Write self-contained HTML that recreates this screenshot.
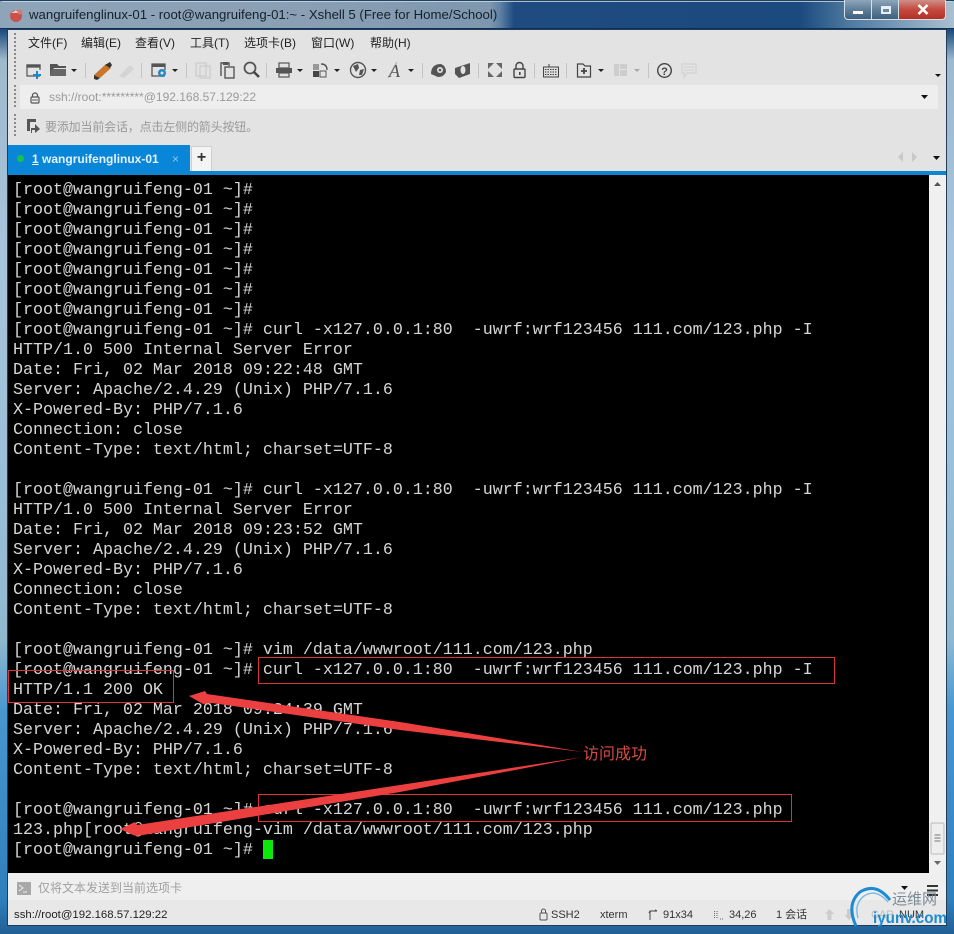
<!DOCTYPE html>
<html><head><meta charset="utf-8">
<style>
html,body{margin:0;padding:0;background:#1d5080}
body{width:954px;height:934px;position:relative;overflow:hidden;font-family:"Liberation Sans","Noto Sans CJK SC",sans-serif}
.a{position:absolute}
#frame{left:0;top:0;width:954px;height:934px;background:linear-gradient(180deg,#1c4a7c 0,#1c4a7c 30px,#9fb9cc 60px,#a7c4dc 250px,#9cc0da 450px,#8fb8cf 640px,#4a97cf 710px,#2f7fbd 900px,#215f94 934px)}
#titlebg{left:0;top:0;width:954px;height:29px;background:linear-gradient(90deg,#8ea4b8 0,#8a9fb4 300px,#7e97ae 490px,#5f82a5 500px,#1f4b80 514px,#1b4a7e 800px,#4f7aa0 850px,#aac0d0 954px);border-top:1px solid #20415f;border-bottom:1px solid #0f3158;box-sizing:border-box}
#tline{left:2px;top:1px;width:950px;height:1px;background:#cfdbe4;opacity:.8}
#title{left:29px;top:7px;font-size:13.2px;line-height:16px;color:#15202c;white-space:nowrap}
#bord{left:7px;top:29px;width:940px;height:897px;border:1px solid #1f3d58;box-sizing:border-box}
#panel{left:8px;top:30px;width:938px;height:141px;background:#e3e3e3}
.menu{position:absolute;top:35px;font-size:12px;line-height:16px;color:#222;white-space:nowrap}
#addr{left:20px;top:85px;width:918px;height:24px;background:#eeeeee}
#addrt{left:49px;top:90px;font-size:12px;line-height:15px;color:#9a9a9a;white-space:nowrap}
#hint{left:45px;top:119px;font-size:12px;line-height:16px;color:#999;white-space:nowrap;letter-spacing:-.17px}
#bluel{left:8px;top:171px;width:938px;height:4px;background:#0f85cf}
#tab{left:8px;top:145px;width:182px;height:27px;background:#0a86d8}
#tabt{left:32px;top:152px;font-size:12px;font-weight:bold;line-height:15px;color:#e4f2fb;white-space:nowrap}
#plus{left:191px;top:146px;width:21px;height:25px;background:#f4f4f4;border:1px solid #cfcfcf;border-bottom:0;box-sizing:border-box;text-align:center;font-weight:bold;font-size:16px;line-height:22px;color:#333}
#term{left:8px;top:175px;width:921px;height:698px;background:#000}
#scr{left:929px;top:175px;width:17px;height:698px;background:#f0f0f0}
pre{position:absolute;left:13px;top:181px;margin:0;font:16.67px/20px "Liberation Mono",monospace;color:#d6d6d6;white-space:pre}
#cursor{left:263px;top:840px;width:10px;height:19px;background:#0be80b}
#send{left:8px;top:873px;width:938px;height:27px;background:#efefef}
#sendt{left:38px;top:880px;font-size:12px;line-height:16px;color:#a0a0a0;white-space:nowrap}
#stat{left:8px;top:900px;width:938px;height:25px;background:#e8e8e8}
.st{position:absolute;top:908px;font-size:11px;line-height:14px;color:#333;white-space:nowrap}
.rb{fill:none;stroke:#d9343a;stroke-width:1}
</style></head><body>
<div class="a" id="frame"></div>
<div class="a" id="titlebg"></div>
<div class="a" id="tline"></div>
<svg class="a" style="left:8px;top:6px" width="18" height="18" viewBox="0 0 18 18"><circle cx="8" cy="10" r="6" fill="#c9504c"/><path d="M3 7 L8 4 L11 7 Z" fill="#e8c8c0"/><circle cx="12" cy="6" r="2.5" fill="#d97a70"/></svg>
<div class="a" id="title">wangruifenglinux-01 - root@wangruifeng-01:~ - Xshell 5 (Free for Home/School)</div>
<!-- window buttons -->
<div class="a" style="left:844px;top:0;width:28px;height:20px;background:linear-gradient(180deg,#8fa6ba,#5f7e98 50%,#3e5f7e);border:1px solid #d5e0e8;border-top:0;box-sizing:border-box;border-radius:0 0 0 4px"></div>
<div class="a" style="left:853px;top:11px;width:10px;height:3px;background:#fff"></div>
<div class="a" style="left:872px;top:0;width:27px;height:20px;background:linear-gradient(180deg,#8fa6ba,#5f7e98 50%,#3e5f7e);border:1px solid #d5e0e8;border-top:0;border-left:0;box-sizing:border-box"></div>
<div class="a" style="left:881px;top:6px;width:10px;height:8px;border:2px solid #e8eef2;border-top-width:3px;box-sizing:border-box;background:#6a8aa4"></div>
<div class="a" style="left:899px;top:0;width:47px;height:20px;background:linear-gradient(180deg,#cf8f88,#c44a3f 50%,#b52f25);border:1px solid #d5e0e8;border-top:0;border-left:0;box-sizing:border-box;border-radius:0 0 4px 0"></div>
<svg class="a" style="left:917px;top:4px" width="12" height="11" viewBox="0 0 12 11"><path d="M1.5 1 L10.5 10 M10.5 1 L1.5 10" stroke="#fff" stroke-width="2.6"/></svg>

<div class="a" id="bord"></div>
<div class="a" id="panel"></div>
<!-- grip dots -->
<div class="a" style="left:14px;top:33px;width:2px;height:46px;background:repeating-linear-gradient(180deg,#8a8a8a 0 2px,transparent 2px 4px)"></div>
<div class="a" style="left:14px;top:85px;width:2px;height:24px;background:repeating-linear-gradient(180deg,#8a8a8a 0 2px,transparent 2px 4px)"></div>
<div class="a" style="left:14px;top:114px;width:2px;height:24px;background:repeating-linear-gradient(180deg,#8a8a8a 0 2px,transparent 2px 4px)"></div>

<div class="menu" style="left:28px">文件(F)</div>
<div class="menu" style="left:81px">编辑(E)</div>
<div class="menu" style="left:135px">查看(V)</div>
<div class="menu" style="left:190px">工具(T)</div>
<div class="menu" style="left:244px">选项卡(B)</div>
<div class="menu" style="left:311px">窗口(W)</div>
<div class="menu" style="left:370px">帮助(H)</div>

<!-- toolbar icons -->
<svg class="a" style="left:0;top:55px" width="954" height="30" viewBox="0 55 954 30">
<g fill="none" stroke="#555" stroke-width="1.2">
<path d="M40 76 H27 V65 H40 V70"/><path d="M27 65 H40 V67 H27 Z" fill="#555"/>
<path d="M37 71 V79 M33 75 H41" stroke="#1b86c8" stroke-width="2"/>
</g>
<path d="M50 64 H57 L59 66 H66 V68 H54 L50 76 Z" fill="#555"/><path d="M52 69 H66 V76 H50 Z" fill="#666"/>
<path d="M71 69 H77 L74 72 Z" fill="#222"/>
<rect x="85" y="63" width="1" height="15" fill="#c4c4c4"/>
<path d="M94 75 L106 64 L111 68 L100 78 Z" fill="#c9762a"/><path d="M94 75 L100 78 L97 80 L94 79 Z" fill="#333"/><path d="M105 65 L110 62 L112 65 L110 68 Z" fill="#333"/>
<path d="M119 76 L130 65 L134 69 L124 78 Z" fill="#d4d4d4"/>
<rect x="141" y="63" width="1" height="15" fill="#c4c4c4"/>
<g fill="none" stroke="#555" stroke-width="1.3"><path d="M165 76 H152 V64 H165 V70"/></g><rect x="152" y="64" width="13" height="3" fill="#555"/>
<circle cx="162" cy="73" r="4" fill="#2a86bf"/><circle cx="162" cy="73" r="1.5" fill="#e3e3e3"/>
<path d="M172 69 H178 L175 72 Z" fill="#222"/>
<rect x="186" y="63" width="1" height="15" fill="#c4c4c4"/>
<g fill="none" stroke="#cdcdcd" stroke-width="1.3"><rect x="196" y="63" width="10" height="13"/><rect x="200" y="66" width="10" height="12"/></g>
<g fill="none" stroke="#555" stroke-width="1.4"><path d="M221 76 V63 H229 V66"/><rect x="225" y="67" width="9" height="11" fill="#e3e3e3"/></g><rect x="223" y="62" width="5" height="3" fill="#555"/>
<circle cx="250" cy="68" r="5.5" fill="none" stroke="#555" stroke-width="1.8"/><path d="M254 72 L259 77" stroke="#444" stroke-width="2.4"/>
<rect x="266" y="63" width="1" height="15" fill="#c4c4c4"/>
<rect x="279" y="63" width="10" height="5" fill="none" stroke="#555" stroke-width="1.2"/><rect x="276" y="68" width="16" height="5" fill="#555"/><rect x="279" y="73" width="10" height="4" fill="#e3e3e3" stroke="#555" stroke-width="1.2"/>
<path d="M297 69 H303 L300 72 Z" fill="#222"/>
<rect x="313" y="64" width="6" height="6" fill="#999"/><rect x="313" y="71" width="6" height="6" fill="#444"/><rect x="320" y="71" width="6" height="6" fill="#e3e3e3" stroke="#555"/>
<path d="M321 64 Q327 64 327 70" fill="none" stroke="#555" stroke-width="1.4"/>
<path d="M334 69 H340 L337 72 Z" fill="#222"/>
<circle cx="358" cy="70" r="7.5" fill="#e3e3e3" stroke="#555" stroke-width="1.4"/><path d="M353 66 L358 64 L359 68 L356 72 Z M360 70 L364 69 L362 75 L359 75 Z" fill="#555"/>
<path d="M371 69 H377 L374 72 Z" fill="#222"/>
<path d="M388 78 L397 62" stroke="#bbb" stroke-width="1.5"/>
<text x="389" y="77" font-family="Liberation Serif" font-style="italic" font-size="18" fill="#555">A</text>
<path d="M408 69 H414 L411 72 Z" fill="#222"/>
<rect x="422" y="63" width="1" height="15" fill="#c4c4c4"/>
<path d="M431 74 Q431 64 441 64 Q446 66 446 72 Q444 77 438 77 Z" fill="#555"/><circle cx="440" cy="70" r="3" fill="#e3e3e3"/><circle cx="440" cy="70" r="1.3" fill="#555"/>
<path d="M455 68 L470 63 V74 L459 78 L455 74 Z" fill="#555"/><ellipse cx="463" cy="70" rx="2.5" ry="4" fill="#e3e3e3"/>
<rect x="478" y="63" width="1" height="15" fill="#c4c4c4"/>
<g fill="#666"><path d="M488 63 H494 L488 69 Z M502 63 H496 L502 69 Z M488 77 H494 L488 71 Z M502 77 H496 L502 71 Z"/></g>
<rect x="514" y="69" width="11" height="8.5" rx="1" fill="none" stroke="#444" stroke-width="1.4"/><path d="M516 69 V66 A3.5 3.5 0 0 1 523 66 V69" fill="none" stroke="#444" stroke-width="1.4"/><rect x="519" y="72" width="1.6" height="3" fill="#444"/>
<rect x="534" y="63" width="1" height="15" fill="#c4c4c4"/>
<rect x="543.500" y="67" width="15" height="10" fill="#ddd" stroke="#444"/><path d="M545 69.500 H557 M545 72 H557 M545 74.500 H557" stroke="#444" stroke-dasharray="1.500 1"/><path d="M549 64 V67" stroke="#444"/>
<rect x="566" y="63" width="1" height="15" fill="#c4c4c4"/>
<path d="M577.500 77 V64 H583 L585 66 H590.500 V77 Z" fill="none" stroke="#444" stroke-width="1.2"/><path d="M584 68 V74 M581 71 H587" stroke="#444" stroke-width="1.8"/>
<path d="M598 69 H604 L601 72 Z" fill="#222"/>
<rect x="614" y="64" width="5" height="12" fill="#cdcdcd"/><rect x="620" y="64" width="7" height="5" fill="#cdcdcd"/><rect x="620" y="70" width="7" height="6" fill="#cdcdcd"/>
<path d="M634 69 H640 L637 72 Z" fill="#aaa"/>
<rect x="648" y="63" width="1" height="15" fill="#c4c4c4"/>
<circle cx="664.500" cy="70.500" r="6.800" fill="none" stroke="#444" stroke-width="1.400"/><text x="664.500" y="75" text-anchor="middle" font-size="11" font-weight="bold" fill="#444" font-family="Liberation Sans">?</text>
<path d="M682 64 H696 V73 H687 L684 77 V73 H682 Z" fill="none" stroke="#d2d2d2" stroke-width="1.300"/><path d="M684 67 H694 M684 70 H694" stroke="#d2d2d2"/>
<path d="M935 74 H941 L938 77 Z" fill="#111"/>
</svg>

<div class="a" id="addr"></div>
<svg class="a" style="left:30px;top:92px" width="10" height="12" viewBox="0 0 10 12"><rect x="1" y="5" width="8" height="6" rx="1" fill="none" stroke="#555" stroke-width="1.200"/><path d="M2.500 5 V3.500 A2.500 2.500 0 0 1 7.500 3.500 V5" fill="none" stroke="#555" stroke-width="1.200"/><rect x="2" y="7.500" width="6" height="1" fill="#555"/></svg>
<div class="a" id="addrt">ssh://root:*********@192.168.57.129:22</div>
<svg class="a" style="left:920px;top:94px" width="9" height="6"><path d="M1 1 H8 L4.500 5 Z" fill="#111"/></svg>

<svg class="a" style="left:26px;top:118px" width="15" height="16" viewBox="0 0 15 16"><path d="M1 1 H10 V4 H4 V13 H1 Z" fill="#555"/><path d="M5 10 H9 V6 L14 11 L9 15 V12 H6 V15 H5 Z" fill="#555"/></svg>
<div class="a" id="hint">要添加当前会话，点击左侧的箭头按钮。</div>

<svg class="a" style="left:895px;top:150px" width="50" height="14"><path d="M8 2 V12 L3 7 Z" fill="#c8c8c8"/><path d="M17 2 V12 L22 7 Z" fill="#c8c8c8"/><path d="M38 6 H45 L41.500 10 Z" fill="#111"/></svg>

<div class="a" id="bluel"></div>
<div class="a" id="tab"></div>
<div class="a" style="left:17px;top:155px;width:7px;height:7px;border-radius:50%;background:#16c24a"></div>
<div class="a" id="tabt"><u>1</u> wangruifenglinux-01</div>
<div class="a" style="left:172px;top:152px;font-size:12px;line-height:15px;color:#8cc6ee">×</div>
<div class="a" id="plus">+</div>

<div class="a" id="term"></div>
<pre>[root@wangruifeng-01 ~]#
[root@wangruifeng-01 ~]#
[root@wangruifeng-01 ~]#
[root@wangruifeng-01 ~]#
[root@wangruifeng-01 ~]#
[root@wangruifeng-01 ~]#
[root@wangruifeng-01 ~]#
[root@wangruifeng-01 ~]# curl -x127.0.0.1:80  -uwrf:wrf123456 111.com/123.php -I
HTTP/1.0 500 Internal Server Error
Date: Fri, 02 Mar 2018 09:22:48 GMT
Server: Apache/2.4.29 (Unix) PHP/7.1.6
X-Powered-By: PHP/7.1.6
Connection: close
Content-Type: text/html; charset=UTF-8

[root@wangruifeng-01 ~]# curl -x127.0.0.1:80  -uwrf:wrf123456 111.com/123.php -I
HTTP/1.0 500 Internal Server Error
Date: Fri, 02 Mar 2018 09:23:52 GMT
Server: Apache/2.4.29 (Unix) PHP/7.1.6
X-Powered-By: PHP/7.1.6
Connection: close
Content-Type: text/html; charset=UTF-8

[root@wangruifeng-01 ~]# vim /data/wwwroot/111.com/123.php
[root@wangruifeng-01 ~]# curl -x127.0.0.1:80  -uwrf:wrf123456 111.com/123.php -I
HTTP/1.1 200 OK
Date: Fri, 02 Mar 2018 09:24:39 GMT
Server: Apache/2.4.29 (Unix) PHP/7.1.6
X-Powered-By: PHP/7.1.6
Content-Type: text/html; charset=UTF-8

[root@wangruifeng-01 ~]# curl -x127.0.0.1:80  -uwrf:wrf123456 111.com/123.php
123.php[root@wangruifeng-vim /data/wwwroot/111.com/123.php
[root@wangruifeng-01 ~]# </pre>
<div class="a" id="cursor"></div>

<!-- scrollbar -->
<div class="a" id="scr"></div>
<svg class="a" style="left:929px;top:175px" width="17" height="698"><path d="M5 11 H12 L8.500 7 Z" fill="#555"/><rect x="2" y="648" width="13" height="31" rx="1" fill="#eee" stroke="#bbb"/><path d="M5.500 660 H11.500 M5.500 663 H11.500 M5.500 666 H11.500" stroke="#777"/><path d="M5 686 H12 L8.500 690 Z" fill="#666"/></svg>

<!-- annotations -->
<svg class="a" style="left:0;top:0" width="954" height="934" viewBox="0 0 954 934">
<rect class="rb" x="258.500" y="657.500" width="576" height="26"/>
<rect class="rb" x="8.500" y="670.500" width="165" height="32"/>
<rect class="rb" x="258.500" y="794.500" width="533" height="27"/>
<path d="M189 696 L205 691 L207 694 L400 722 L583 752 L400 730 L212 703 L203 704 Z" fill="#ec3f3f"/>
<path d="M120 829 L135 822 L137 825 L400 785 L583 757 L400 792 L137 836 L133 835 Z" fill="#ec3f3f"/>
<text x="583" y="759" font-family="'Liberation Sans','Noto Sans CJK SC',sans-serif" font-size="16" fill="#d84a44">访问成功</text>
</svg>

<div class="a" id="send"></div>
<svg class="a" style="left:17px;top:882px" width="14" height="13"><rect width="14" height="13" fill="#a8a8a8"/><path d="M2 3 L6 6 L2 9 M6 10 H10" fill="none" stroke="#eee"/></svg>
<div class="a" id="sendt">仅将文本发送到当前选项卡</div>
<svg class="a" style="left:900px;top:884px" width="40" height="14"><path d="M1 2 H8 L4.500 6 Z" fill="#111"/><path d="M27 2 H38 M27 6.500 H38 M27 11 H38" stroke="#333" stroke-width="2"/></svg>

<div class="a" id="stat"></div>
<div class="st" style="left:14px;color:#222;font-size:11.4px">ssh://root@192.168.57.129:22</div>
<svg class="a" style="left:539px;top:908px" width="10" height="14"><rect x="1" y="5" width="7" height="7" rx="1" fill="none" stroke="#555"/><path d="M2.500 5 V3 A2 2 0 0 1 6.500 3 V5" fill="none" stroke="#555"/></svg>
<div class="st" style="left:551px">SSH2</div>
<div class="st" style="left:600px">xterm</div>
<svg class="a" style="left:648px;top:909px" width="11" height="12"><path d="M2 11 V2 H9 M2 2 L1 4 M9 2 L7 1" fill="none" stroke="#444"/></svg>
<div class="st" style="left:663px">91x34</div>
<svg class="a" style="left:713px;top:910px" width="11" height="10"><path d="M1.500 1 V9 M4 1 V9" stroke="#666" stroke-dasharray="1 1"/><path d="M7 9 H8 M9 9 H10" stroke="#666"/></svg>
<div class="st" style="left:729px">34,26</div>
<div class="st" style="left:776px">1 会话</div>
<svg class="a" style="left:824px;top:908px" width="36" height="14"><path d="M5.500 1 L10 6 H7.500 V12 H3.500 V6 H1 Z" fill="#ccc"/><path d="M23 1 H27 V7 H29.500 L25 12 L20.500 7 H23 Z" fill="#ccc"/></svg>
<div class="st" style="left:871px;color:#bbb">CAP</div>
<div class="st" style="left:899px;color:#333">NUM</div>

<!-- watermark -->
<svg class="a" style="left:846px;top:884px" width="108" height="50" viewBox="0 0 108 50">
<path d="M44 16 Q30 -2 14 8 Q0 20 10 42" fill="none" stroke="#1c8bd4" stroke-width="3"/>
<path d="M42 18 Q30 4 18 12 Q8 20 12 34" fill="none" stroke="#7fbce2" stroke-width="1.500"/>
<text x="46" y="20" font-family="'Liberation Sans','Noto Sans CJK SC',sans-serif" font-size="15" fill="#7d8a94">运维网</text>
<text x="27" y="39" font-family="'Liberation Sans',sans-serif" font-size="16" font-weight="bold" fill="#1c8bd4" textLength="74" lengthAdjust="spacingAndGlyphs">iyunv.com</text>
</svg>
</body></html>
